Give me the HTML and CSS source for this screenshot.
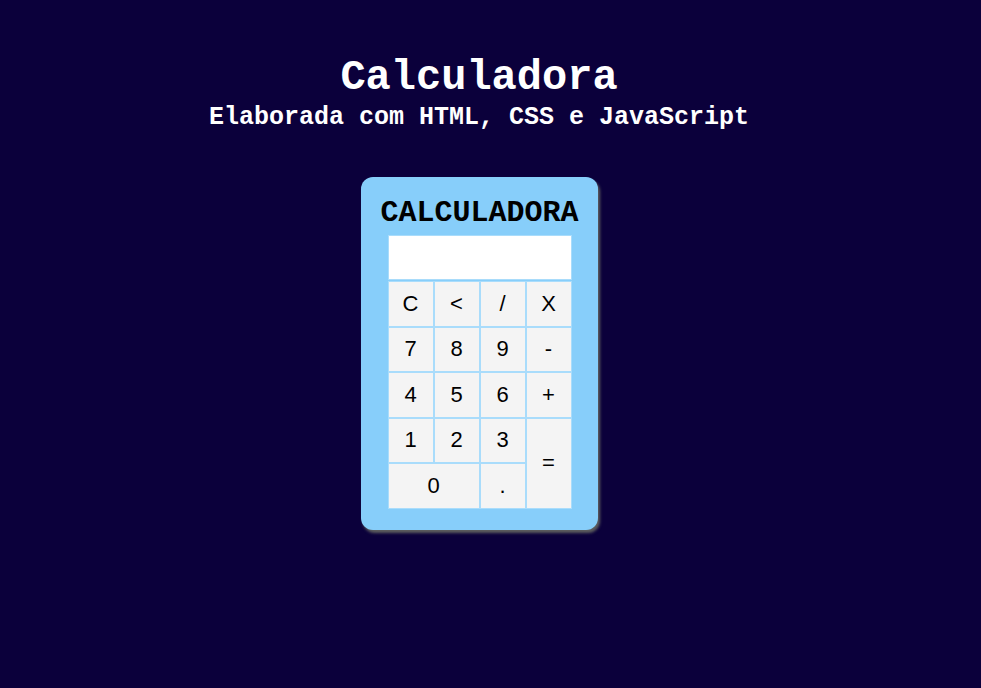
FILE: index.html
```html
<!DOCTYPE html>
<html lang="pt-BR">
<head>
<meta charset="utf-8">
<title>Calculadora</title>
<link rel="stylesheet" href="styles.css">
</head>
<body>
<header class="header">
  <h1 class="title">Calculadora</h1>
  <p class="subtitle">Elaborada com HTML, CSS e JavaScript</p>
</header>
<main class="calc">
  <h2 class="calc-title">CALCULADORA</h2>
  <div class="display"></div>
  <div class="keys">
    <button class="key">C</button>
    <button class="key">&lt;</button>
    <button class="key">/</button>
    <button class="key">X</button>
    <button class="key">7</button>
    <button class="key">8</button>
    <button class="key">9</button>
    <button class="key">-</button>
    <button class="key">4</button>
    <button class="key">5</button>
    <button class="key">6</button>
    <button class="key">+</button>
    <button class="key">1</button>
    <button class="key">2</button>
    <button class="key">3</button>
    <button class="key key-tall">=</button>
    <button class="key key-wide">0</button>
    <button class="key">.</button>
  </div>
</main>
</body>
</html>
```
FILE: styles.css
```css
html, body {
  margin: 0;
  padding: 0;
}
body {
  background: #0b003b;
  min-height: 688px;
  padding-right: 23px;
  font-family: "Liberation Mono", "Courier New", monospace;
}
.header {
  padding-top: 54px;
  text-align: center;
  color: #ffffff;
}
.title {
  margin: 0;
  font-size: 42px;
  line-height: 49px;
  font-weight: bold;
}
.subtitle {
  margin: 1px 0 0;
  font-size: 25px;
  line-height: 28px;
  font-weight: bold;
}
.calc {
  width: 237px;
  box-sizing: border-box;
  margin: 45px auto 0;
  padding: 19px 0 21px;
  background: #87cefa;
  border-radius: 12px;
  box-shadow: 2px 3px 3px #5e5e5e;
  display: flex;
  flex-direction: column;
  align-items: center;
}
.calc-title {
  margin: 0 0 5px;
  font-size: 30px;
  line-height: 34px;
  font-weight: bold;
  color: #000;
  padding-left: 1px;
}
.display {
  width: 184px;
  height: 45px;
  box-sizing: border-box;
  background: #fff;
  border: 1px solid #a9dcfb;
  margin-bottom: 1px;
  margin-left: 1px;
}
.keys {
  display: grid;
  grid-template-columns: repeat(4, 46px);
  grid-auto-rows: 45.5px;
  margin-left: 1px;
}
.key {
  margin: 0;
  padding: 0;
  border: 1px solid #a9dcfb;
  background: #f4f4f4;
  font-family: "Liberation Sans", Arial, sans-serif;
  font-size: 22px;
  color: #000;
  border-radius: 0;
}
.key-tall {
  grid-column: 4;
  grid-row: 4 / span 2;
}
.key-wide {
  grid-column: 1 / span 2;
}
```
